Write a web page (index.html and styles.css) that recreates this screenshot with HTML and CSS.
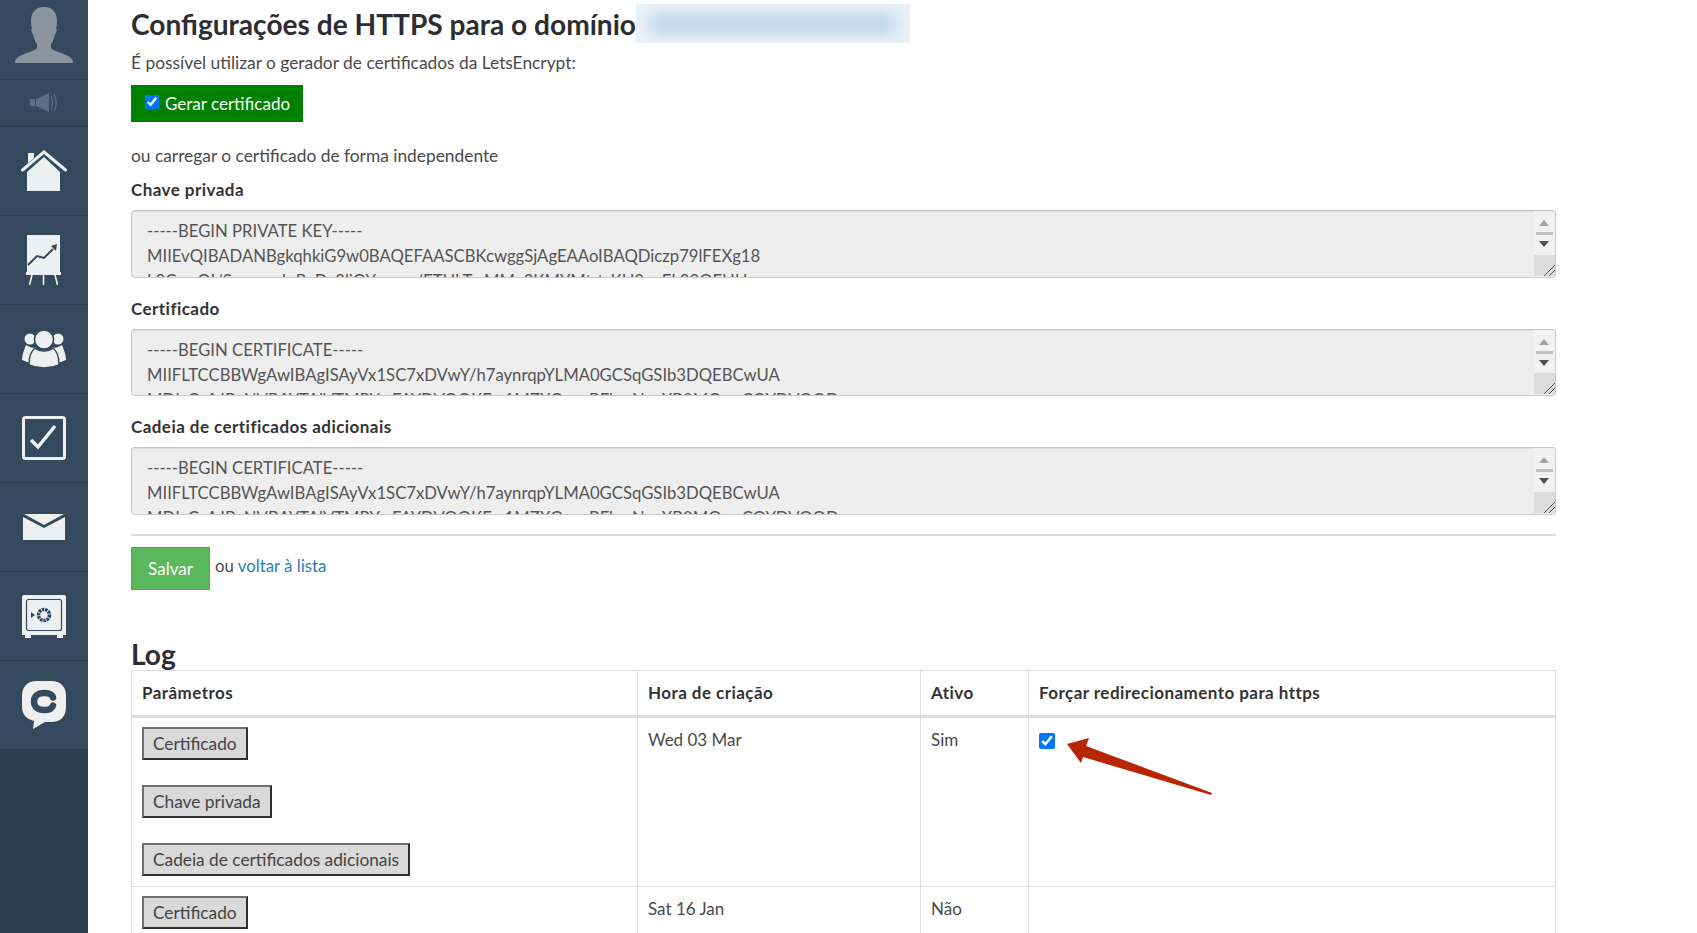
FILE: index.html
```html
<!DOCTYPE html>
<html lang="pt">
<head>
<meta charset="utf-8">
<title>Configurações de HTTPS</title>
<link rel="stylesheet" href="styles.css">
</head>
<body>
<div class="page">
  <nav class="sidebar">
    <a class="nav-item nav-avatar">
      <svg width="58" height="56" viewBox="0 0 58 56"><path fill="#8a949f" d="M29 0c9 0 13 6 13 14 0 3 0 5-1 7 1 1 1 3 0 5-1 2-2 3-2 5-1 3-2 5-3 6v4c3 3 9 4 15 7 4 2 7 3 7 8H0c0-5 3-6 7-8 6-3 12-4 15-7v-4c-1-1-2-3-3-6 0-2-1-3-2-5-1-2-1-4 0-5-1-2-1-4-1-7C16 6 20 0 29 0z"/></svg>
    </a>
    <a class="nav-item nav-sound">
      <svg width="28" height="19" viewBox="0 0 28 19"><g fill="#5b6f84"><rect x="0" y="6" width="5" height="7"/><path d="M6 6l13-6v19L6 13z"/></g><path fill="none" stroke="#5b6f84" stroke-width="1.3" d="M21 3c2 4 2 9 0 13M24 1c3 5 3 12 0 17"/></svg>
    </a>
    <a class="nav-item nav-home">
      <svg width="46" height="41" viewBox="0 0 46 41"><g fill="#ecf0f1"><path d="M23 7L6 22v19h33V22z"/><path d="M7 3h6v5l-6 5z"/></g><path fill="none" stroke="#ecf0f1" stroke-width="3" stroke-linecap="round" d="M1.5 20L23 2l21.5 18"/></svg>
    </a>
    <a class="nav-item">
      <svg width="36" height="50" viewBox="0 0 36 50"><rect x="1" y="0" width="33" height="37" fill="#ecf0f1"/><path fill="none" stroke="#34495e" stroke-width="2" d="M2 30l9-9 7 2 9-9"/><path fill="#34495e" d="M25 11l6-2-1 7z"/><rect x="0" y="37" width="35" height="3" fill="#ecf0f1"/><path fill="none" stroke="#ecf0f1" stroke-width="1.6" d="M6 40L3.500 50M17.500 40v10M29 40l2.500 10"/></svg>
    </a>
    <a class="nav-item">
      <svg width="44" height="38" viewBox="0 0 44 38"><g fill="#ecf0f1"><circle cx="8" cy="9" r="5.500"/><circle cx="36" cy="9" r="5.500"/><path d="M4 15c-2 5-4 10-4 15l8 3c1-6 3-11 6-15-4 0-7-1-10-3zM40 15c2 5 4 10 4 15l-8 3c-1-6-3-11-6-15 4 0 7-1 10-3z"/></g><circle cx="22" cy="9.500" r="9.500" fill="#ecf0f1" stroke="#34495e" stroke-width="1.500"/><path fill="#ecf0f1" stroke="#34495e" stroke-width="1.500" d="M13 18c5 4 13 4 18 0 4 3 6 10 6 17-9 4-21 4-30 0 0-7 2-14 6-17z"/></svg>
    </a>
    <a class="nav-item">
      <svg width="44" height="44" viewBox="0 0 44 44"><rect x="1.500" y="1.500" width="41" height="41" rx="2" fill="none" stroke="#ecf0f1" stroke-width="3"/><path fill="none" stroke="#ecf0f1" stroke-width="3.500" d="M9 24l7 7 17-21"/></svg>
    </a>
    <a class="nav-item">
      <svg width="42" height="26" viewBox="0 0 42 26"><path fill="#ecf0f1" d="M0 3l21 11L42 3v23H0z"/><path fill="#ecf0f1" d="M1 0h40L21 11z"/></svg>
    </a>
    <a class="nav-item">
      <svg width="44" height="43" viewBox="0 0 44 43"><path fill="#ecf0f1" d="M2 0h40a2 2 0 0 1 2 2v38h-3v3h-6v-3H9v3H3v-3H0V2a2 2 0 0 1 2-2z"/><rect x="4.500" y="4.500" width="35" height="31" rx="2" fill="none" stroke="#34495e" stroke-width="1.200"/><circle cx="22" cy="20" r="5.500" fill="none" stroke="#34495e" stroke-width="3.500" stroke-dasharray="2.500 .8"/><path fill="#34495e" d="M9 17l4 3-4 3z"/></svg>
    </a>
    <a class="nav-item">
      <svg width="44" height="48" viewBox="0 0 44 48"><path fill="#efefef" d="M15 0h14c10 0 15 6 15 15v11c0 9-5 15-15 15h-6L11 48l1-8C4 38 0 33 0 26V15C0 6 5 0 15 0z"/><path fill="none" stroke="#34495e" stroke-width="6.500" stroke-linecap="round" d="M31 16.500c-1-3-4-4.500-8-4.500h-1c-6 0-10 3-10 8.500S16 29 22 29h1c4 0 7-1.500 8-4.500"/></svg>
    </a>
    <div class="nav-rest"></div>
  </nav>

  <main class="content">
    <h1 class="title">Configurações de HTTPS para o domínio<span class="blur"><span class="blur-ink"></span></span></h1>
    <p class="intro">É possível utilizar o gerador de certificados da LetsEncrypt:</p>
    <label class="gen-btn"><input class="gen-check" type="checkbox" checked>Gerar certificado</label>
    <p class="alt">ou carregar o certificado de forma independente</p>

    <div class="field-label">Chave privada</div>
    <div class="field">
      <textarea class="area" readonly>-----BEGIN PRIVATE KEY-----
MIIEvQIBADANBgkqhkiG9w0BAQEFAASCBKcwggSjAgEAAoIBAQDiczp79lFEXg18
L8CmsQI/Ssmmsgb PpDc2ljQYmmm/ETHbTmMMe8KMYMtrtsKH8qyFL89QFHH</textarea>
      <div class="sb"><i class="up"></i><i class="bar"></i><i class="down"></i><b class="grip"></b></div>
    </div>

    <div class="field-label next">Certificado</div>
    <div class="field field-short">
      <textarea class="area" readonly>-----BEGIN CERTIFICATE-----
MIIFLTCCBBWgAwIBAgISAyVx1SC7xDVwY/h7aynrqpYLMA0GCSqGSIb3DQEBCwUA
MDIxCzAJBgNVBAYTAlVTMRYwFAYDVQQKEw1MZXQncyBFbmNyeXB0MQswCQYDVQQD</textarea>
      <div class="sb"><i class="up"></i><i class="bar"></i><i class="down"></i><b class="grip"></b></div>
    </div>

    <div class="field-label next">Cadeia de certificados adicionais</div>
    <div class="field">
      <textarea class="area" readonly>-----BEGIN CERTIFICATE-----
MIIFLTCCBBWgAwIBAgISAyVx1SC7xDVwY/h7aynrqpYLMA0GCSqGSIb3DQEBCwUA
MDIxCzAJBgNVBAYTAlVTMRYwFAYDVQQKEw1MZXQncyBFbmNyeXB0MQswCQYDVQQD</textarea>
      <div class="sb"><i class="up"></i><i class="bar"></i><i class="down"></i><b class="grip"></b></div>
    </div>

    <hr class="rule">
    <div class="actions">
      <button class="save" type="button">Salvar</button>
      <span class="back">ou <a class="back-link">voltar à lista</a></span>
    </div>

    <h2 class="log-title">Log</h2>
    <table class="log">
      <colgroup><col class="c1"><col class="c2"><col class="c3"><col class="c4"></colgroup>
      <thead>
        <tr><th>Parâmetros</th><th>Hora de criação</th><th>Ativo</th><th>Forçar redirecionamento para https</th></tr>
      </thead>
      <tbody>
        <tr>
          <td class="btns"><button class="doc" type="button">Certificado</button><button class="doc" type="button">Chave privada</button><button class="doc" type="button">Cadeia de certificados adicionais</button></td>
          <td>Wed 03 Mar</td>
          <td>Sim</td>
          <td><input class="force" type="checkbox" checked></td>
        </tr>
        <tr>
          <td class="btns"><button class="doc" type="button">Certificado</button></td>
          <td>Sat 16 Jan</td>
          <td>Não</td>
          <td></td>
        </tr>
      </tbody>
    </table>
    <svg class="arrow" width="150" height="60" viewBox="1065 738 150 60"><path fill="#b92500" d="M1067 744L1089 738 1086 746 1212 793 1211 795 1083 757 1081 763z"/></svg>
  </main>
</div>
</body>
</html>
```
FILE: styles.css
```css
* { box-sizing: border-box; }
html, body { margin: 0; height: 933px; overflow: hidden; background: #fff; }
body { font-family: "Lato", "Liberation Sans", sans-serif; font-size: 17px; color: #4a4a4a; }
.page { display: flex; height: 933px; }

.sidebar { width: 88px; flex: none; display: flex; flex-direction: column; background: #34495e; }
.nav-item { height: 89px; flex: none; display: flex; align-items: center; justify-content: center; border-bottom: 1px solid #2c3d50; }
.nav-avatar { height: 80px; align-items: flex-start; padding-top: 7px; }
.nav-sound { height: 47px; padding-bottom: 1px; border-bottom-width: 2px; }
.nav-home { padding-bottom: 2px; }
.nav-rest { flex: 1; background: #2c3e50; }

.content { position: relative; width: 1425px; margin-left: 43px; flex: none; }
.title { margin: 4px 0 0; height: 39px; line-height: 41px; font-size: 28.100px; font-weight: 700; color: #2d2d33; display: flex; white-space: nowrap; }
.blur { display: block; width: 274px; height: 39px; overflow: hidden; background: #eaf2f8; }
.blur-ink { display: block; margin: 10px 14px; height: 20px; background: #bfd6e8; filter: blur(7px); }
.intro { margin: 9px 0 11px; line-height: 22px; font-size: 17.350px; }
.gen-btn { display: flex; align-items: center; width: 172px; height: 37px; padding: 0 0 0 14px; background: #008000; color: #fff; font-size: 17px; }
.gen-check { width: 14px; height: 14px; margin: 0 6px 4px 0; }
.alt { margin: 23px 0 12px; line-height: 22px; font-size: 17.350px; }

.field-label { font-size: 17px; letter-spacing: .45px; font-weight: 700; line-height: 22px; margin-bottom: 9px; color: #333; }
.field-label.next { margin-top: 20px; }
.field { position: relative; height: 68px; }
.field-short { height: 67px; }
.area { display: block; width: 100%; height: 100%; padding: 8px 15px 6px; margin: 0; border: 1px solid #ccc; border-top-color: #c4c4c4; border-radius: 4px; background: #eee; box-shadow: inset 0 1px 1px rgba(0,0,0,.075); font: inherit; font-size: 16.700px; line-height: 25px; color: #555; resize: none; overflow: hidden; white-space: pre; outline: 0; }
.sb { position: absolute; right: 1px; top: 1px; bottom: 1px; width: 21px; background: #f1f1f1; border-radius: 0 4px 4px 0; }
.up, .down { position: absolute; left: 5px; width: 0; height: 0; border-left: 5px solid transparent; border-right: 5px solid transparent; }
.up { top: 9px; border-bottom: 6px solid #a3a3a3; }
.down { top: 30px; border-top: 6px solid #505050; }
.bar { position: absolute; left: 2px; right: 2px; top: 21px; height: 3px; background: #c1c1c1; }
.grip { position: absolute; left: 0; right: 0; bottom: 1px; height: 21px; background-color: #dcdcdc; background-image: linear-gradient(135deg, transparent 0 72%, #555 72% 75%, transparent 75% 85%, #555 85% 88%, transparent 88%); }

.rule { margin: 19px 0 0; border: 0; border-top: 2px solid #ddd; }
.actions { display: flex; margin-top: 11px; height: 43px; }
.save { width: 79px; height: 43px; padding: 0; border: 1px solid #4cae4c; background: #5cb85c; color: #fff; font: inherit; font-size: 17px; }
.back { margin: 8px 0 0 5px; line-height: 22px; font-size: 16.800px; }
.back-link { color: #337ab7; }

.log-title { margin: 49px 0 0; height: 31px; line-height: 30px; font-size: 28.100px; font-weight: 700; color: #2d2d33; }
.log { width: 100%; table-layout: fixed; border-collapse: collapse; }
.c1 { width: 506px; }
.c2 { width: 283px; }
.c3 { width: 108px; }
.log th, .log td { border: 1px solid #ddd; padding: 10px; text-align: left; vertical-align: top; line-height: 26px; }
.log th { height: 46px; padding-top: 9px; padding-bottom: 9px; border-bottom: 3px solid #ddd; font-weight: 700; color: #333; letter-spacing: .45px; }
.log td { padding-top: 9px; padding-bottom: 9px; }
.log td.btns { padding-bottom: 10px; }
.doc { display: block; height: 33px; padding: 0 9px; border: 2px solid; border-color: #707070 #303030 #303030 #707070; background: #d9d9d9; color: #444; font: inherit; font-size: 17.300px; }
.doc + .doc { margin-top: 25px; }
.force { display: block; width: 16px; height: 16px; margin: 6px 0 0; }
.arrow { position: absolute; left: 934px; top: 738px; }
```
